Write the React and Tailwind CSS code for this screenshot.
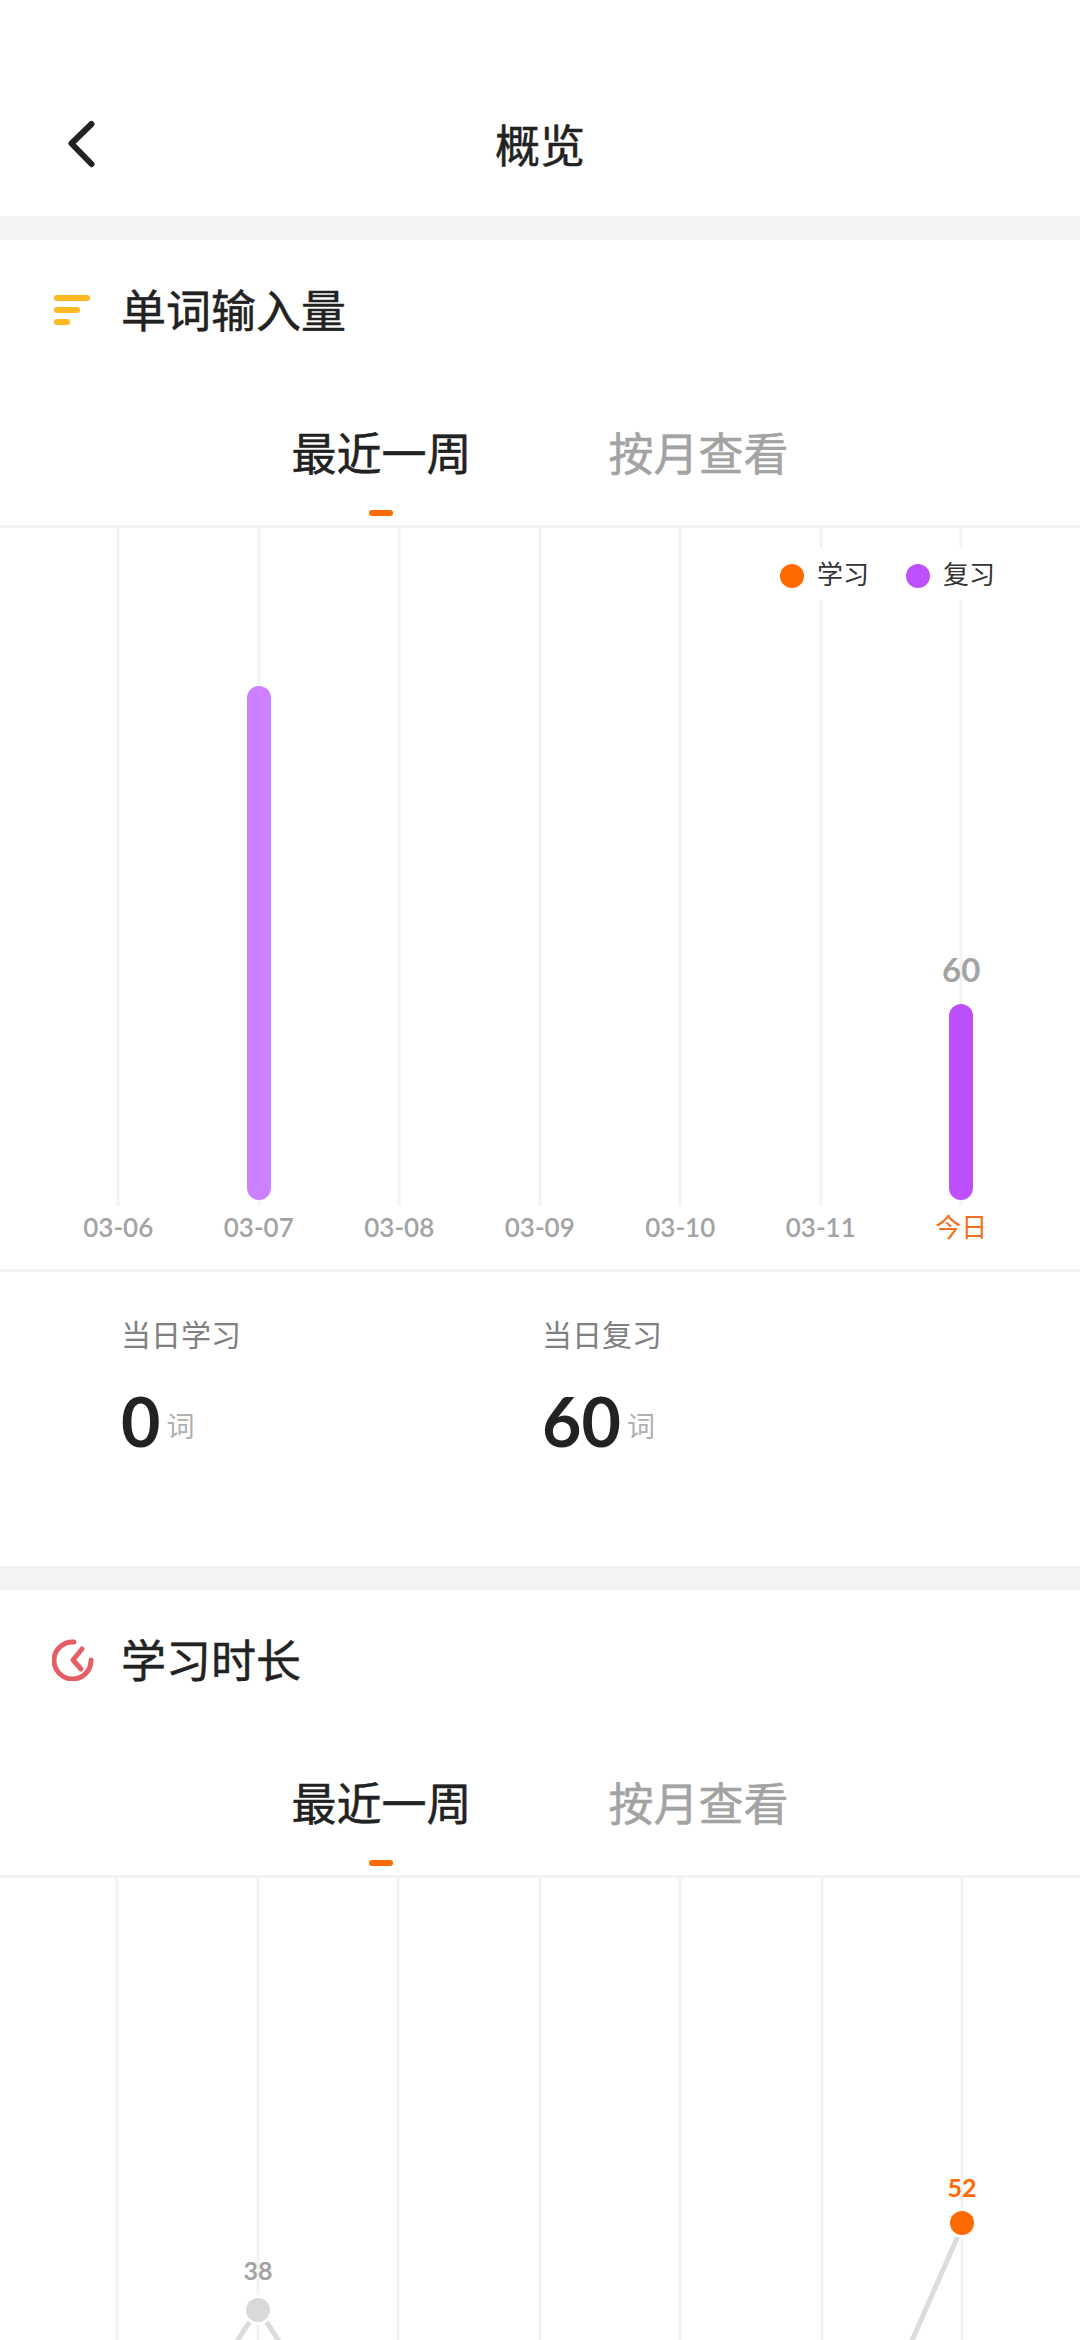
import React from "react";

const days = ["03-06", "03-07", "03-08", "03-09", "03-10", "03-11", "今日"];
const gridX = [117, 258, 398, 540, 680, 822, 962];

const cjk = "font-['Noto_Sans_CJK_SC','Noto_Sans',sans-serif]";
const latin = "font-['Lato','Noto_Sans_CJK_SC',sans-serif]";

const WordsIcon = () => (
  <svg width="36" height="30" viewBox="0 0 36 30">
    <g stroke="#fdb91f" strokeWidth="6" strokeLinecap="round">
      <path d="M3 3H33" />
      <path d="M3 15H23" />
      <path d="M3 27H13" />
    </g>
  </svg>
);

const ClockIcon = () => (
  <svg className="-ml-0.5" width="42" height="42" viewBox="0 0 42 42" fill="none" stroke="#e55e66" strokeWidth="5" strokeLinecap="round" strokeLinejoin="round">
    <path d="M22 3A18.500 18.500 0 1 0 39 21" />
    <path d="M30 10L21 21L29 30" />
  </svg>
);

const Tabs = () => (
  <div className="flex justify-center gap-[137px] h-[60px] mt-[82px]">
    <div className="relative text-[45px] leading-[60px] text-[#222222] [-webkit-text-stroke:0.5px]">
      最近一周
      <div className="absolute left-1/2 -translate-x-1/2 top-[88px] w-6 h-1.5 rounded-full bg-[#ff6a00]" />
    </div>
    <div className="text-[45px] leading-[60px] text-[#a3a3a3] [-webkit-text-stroke:0.5px]">按月查看</div>
  </div>
);

const Section = ({ icon, title, children }) => (
  <section>
    <div className="h-6 bg-[#f3f3f3]" />
    <div className="flex items-center h-[60px] mt-10 pl-[54px]">
      <div className="w-[67px] flex items-center">{icon}</div>
      <h2 className="pb-[3px] text-[45px] leading-[60px] text-[#222222] [-webkit-text-stroke:0.5px]">{title}</h2>
    </div>
    <Tabs />
    <div className="h-[3px] mt-[43px] bg-[#f3f3f3]" />
    {children}
  </section>
);

const Column = ({ label, height, color, value }) => (
  <div className="flex flex-col items-center">
    <div className="relative h-[678px] w-full flex flex-col items-center justify-end pb-1.5">
      <div className="absolute inset-y-0 left-1/2 -translate-x-1/2 w-[3px] bg-[#f3f3f3]" />
      {value && <span className={`relative mb-[15px] text-[33px] leading-10 font-bold text-[#a3a3a3] ${latin}`}>{value}</span>}
      {height && <div className={`relative w-6 rounded-full ${color} ${height}`} />}
    </div>
    <span className={`mt-1.5 text-[26px] leading-[30px] ${label === "今日" ? "font-normal text-[#f07020]" : "font-semibold text-[#a3a3a3]"} ${latin}`}>
      {label}
    </span>
  </div>
);

const LegendItem = ({ color, label }) => (
  <div className="flex items-center gap-[13px]">
    <div className={`mt-1 w-6 h-6 rounded-full ${color}`} />
    <span className="pb-0.5 text-[26px] leading-[30px] text-[#333333]">{label}</span>
  </div>
);

const Stat = ({ label, value, className }) => (
  <div className={className}>
    <div className="text-[30px] leading-10 text-[#808080]">{label}</div>
    <div className="flex items-end mt-[28px]">
      <span className={`text-[68px] leading-[80px] font-bold text-[#222222] ${latin}`}>{value}</span>
      <span className="ml-1.5 mb-4 text-[28px] leading-10 text-[#b0b0b0]">词</span>
    </div>
  </div>
);

export default function App() {
  return (
    <div className={`w-[1080px] h-[2340px] overflow-hidden bg-white ${cjk}`}>
      <header className="h-[216px] pt-[100px]">
        <div className="grid grid-cols-[1fr_auto_1fr] items-center h-[90px]">
          <svg className="ml-[64px]" width="36" height="54" viewBox="0 0 36 54" fill="none" stroke="#222222" strokeWidth="6" strokeLinecap="round" strokeLinejoin="round">
            <path d="M27.500 6L7.500 25.500L27.500 46" />
          </svg>
          <h1 className="pb-[2px] text-[45px] leading-[60px] text-[#222222] [-webkit-text-stroke:0.5px]">概览</h1>
          <div />
        </div>
      </header>

      <Section icon={<WordsIcon />} title="单词输入量">
        <div className="relative h-[741px] pl-[48px]">
          <div className="grid grid-cols-[repeat(7,140.500px)]">
            {days.map((day) => (
              <Column
                key={day}
                label={day}
                height={day === "03-07" ? "h-[514px]" : day === "今日" ? "h-[196px]" : null}
                color={day === "03-07" ? "bg-[#cd80ff]" : "bg-[#bc50ff]"}
                value={day === "今日" ? "60" : null}
              />
            ))}
          </div>
          <div className="absolute top-5 right-[81px] h-[52px] flex items-center gap-[37px] pl-3 pr-1 bg-white">
            <LegendItem color="bg-[#ff6a00]" label="学习" />
            <LegendItem color="bg-[#bc50ff]" label="复习" />
          </div>
        </div>
        <div className="h-[3px] bg-[#f3f3f3]" />
        <div className="flex h-[294px] pt-[41px] pl-[121px]">
          <Stat className="w-[421px]" label="当日学习" value="0" />
          <Stat label="当日复习" value="60" />
        </div>
      </Section>

      <Section icon={<ClockIcon />} title="学习时长">
        <svg className="block" width="1080" height="462" viewBox="0 0 1080 462" fill="none">
          {gridX.map((x) => (
            <path key={x} d={`M${x} 0V462`} stroke="#f3f3f3" strokeWidth="3" />
          ))}
          <path d="M264 440L290 480M252 440L226 480M958 358L910 467" stroke="#dcdcdc" strokeWidth="5" />
          <circle cx="258" cy="432" r="15" fill="#ffffff" />
          <circle cx="258" cy="432" r="12" fill="#d9d9d9" />
          <circle cx="962" cy="345" r="15" fill="#ffffff" />
          <circle cx="962" cy="345" r="12" fill="#ff6a00" />
          <text x="258" y="402" textAnchor="middle" fontSize="25" fontWeight="700" fill="#a3a3a3" fontFamily="Lato, sans-serif">38</text>
          <text x="962" y="319" textAnchor="middle" fontSize="25" fontWeight="700" fill="#ff6a00" fontFamily="Lato, sans-serif">52</text>
        </svg>
      </Section>
    </div>
  );
}
